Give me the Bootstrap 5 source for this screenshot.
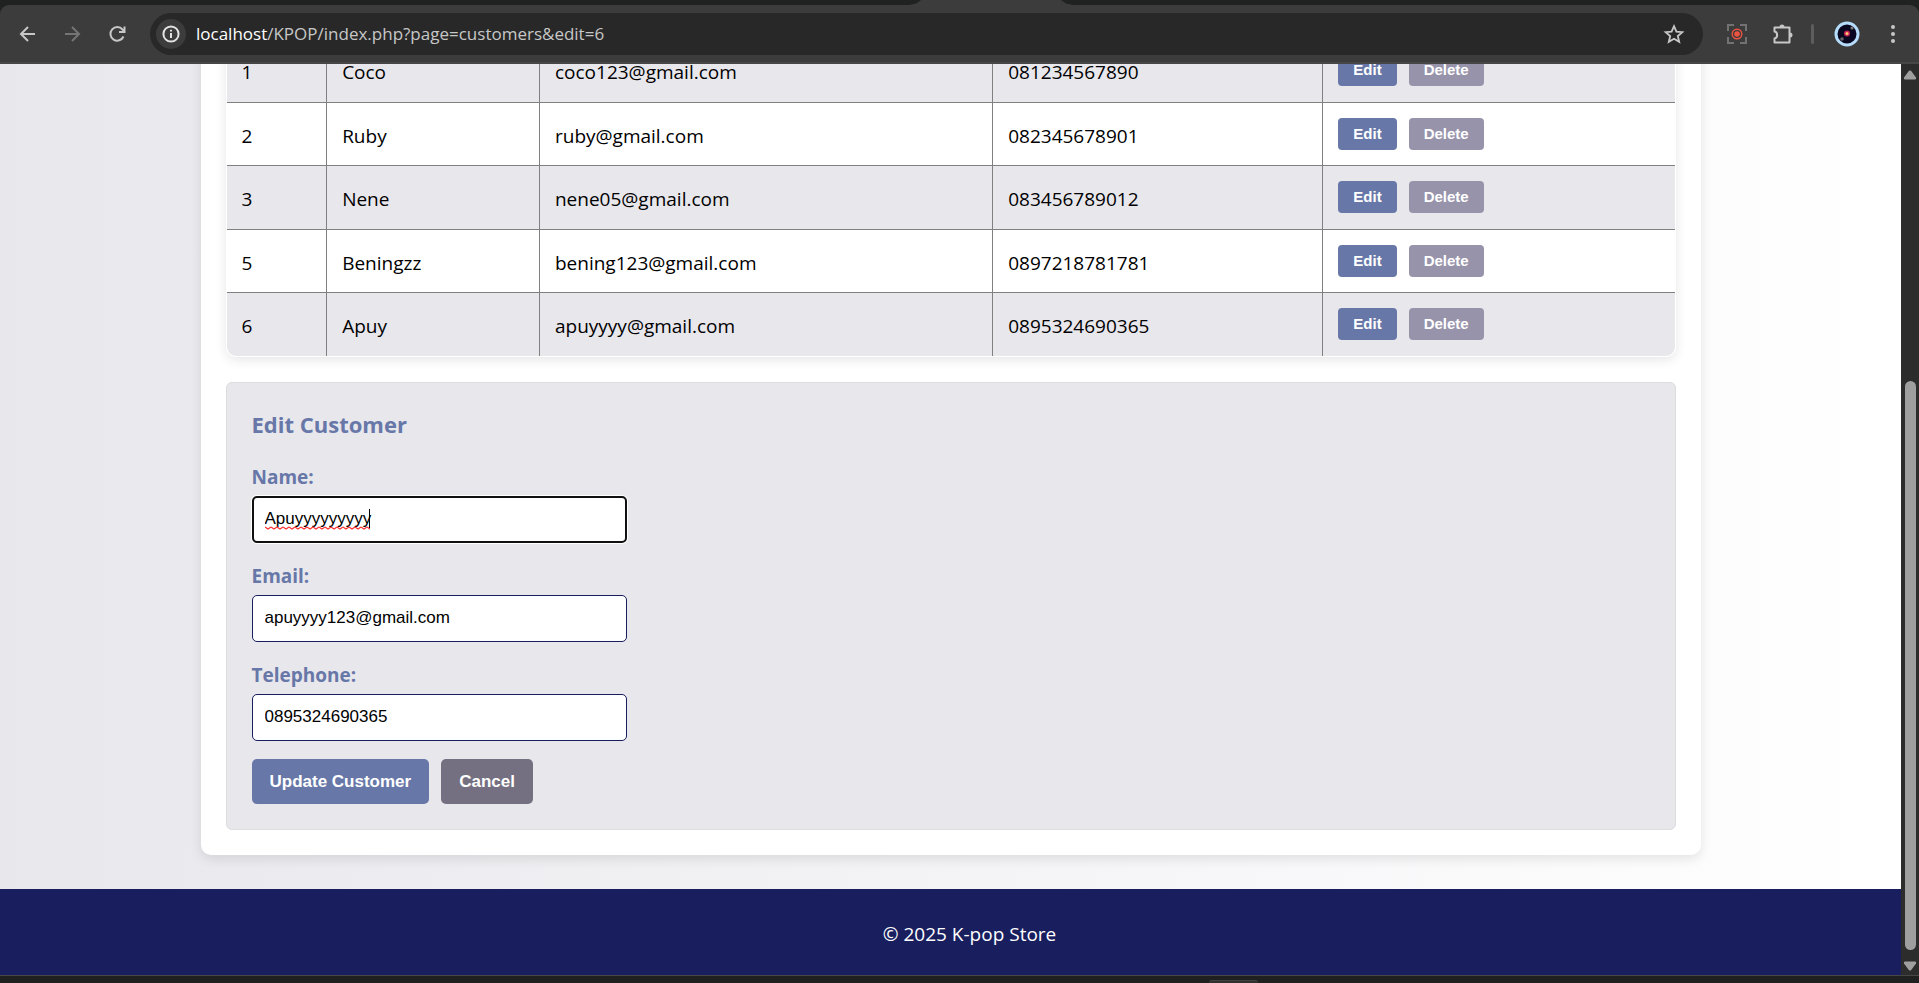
<!DOCTYPE html>
<html lang="en">
<head>
<meta charset="utf-8">
<meta name="viewport" content="width=device-width, initial-scale=1">
<title>K-pop Store - Customers</title>
<link href="https://cdn.jsdelivr.net/npm/bootstrap@5.3.0/dist/css/bootstrap.min.css" rel="stylesheet">
<style>
  :root { --steel: #6777a8; --mauve: #9793ab; --slate: #747081; --navy: #191e5e; --mist: #e8e7ec; --frame: #3c3c3c; }
  body { font-family: "Open Sans", "Noto Sans", sans-serif; font-size: 19px; line-height: 27px; color: #000; background: #202222; }

  /* browser frame */
  .tab-strip { height: 5px; flex: none; background: #202222; }
  .tab-foot { position: absolute; left: 48%; top: 0; width: 140px; height: 5px; background: var(--frame); }
  .tab-foot::before, .tab-foot::after { content: ""; position: absolute; top: 0; width: 12px; height: 5px; background: var(--frame); }
  .tab-foot::before { right: 100%; clip-path: polygon(100% 0, 100% 100%, 0 100%, 60% 70%); }
  .tab-foot::after { left: 100%; clip-path: polygon(0 0, 0 100%, 100% 100%, 40% 70%); }
  .toolbar { height: 59px; flex: none; padding: 0 17px; background: var(--frame); border-bottom: 2px solid #474747; border-radius: 9px 9px 0 0; }
  .tool { display: flex; padding: 0; border: 0; background: none; }
  .omnibox { height: 42px; margin-left: 22px; padding: 0 18px 0 6px; border-radius: 21px; background: #282828; color: #c7c7c7; }
  .site-info { width: 30px; height: 30px; margin-right: 10px; border-radius: 50%; background: var(--frame); }
  .address { font-size: 17px; line-height: 24px; }
  .address b { font-weight: 400; color: #fff; }
  .tool-rule { width: 3px; height: 20px; border-radius: 2px; background: #5d5d5d; }

  /* page */
  .viewport { min-height: 0; overflow: hidden; }
  .page { background: linear-gradient(to right, var(--mist), #fff); }
  .sheet { flex: none; width: calc(100% - 50px); max-width: 1500px; padding: 25px; background: #fff; border-radius: 10px; box-shadow: 0 4px 12px rgba(0,0,0,.1); }
  .table-shell { border: 1px solid #fff; border-top: 0; border-radius: 10px; box-shadow: 0 3px 12px rgba(0,0,0,.1); overflow: hidden; margin-bottom: 25px; }
  .customers { width: 100%; table-layout: fixed; border-collapse: separate; border-spacing: 0; }
  .customers td { height: 63px; padding: 17px 15px 0; line-height: 32px; vertical-align: top; background: #fff; border-right: 1px solid #808080; border-bottom: 1px solid #808080; }
  .customers tr:nth-child(odd) td { height: 64px; background: var(--mist); }
  .customers td:last-child { border-right: 0; padding: 15px 15px 0; }
  .customers tr:last-child td { height: 63px; border-bottom: 0; }
  .w-id { width: 6.95%; } .w-name { width: 14.7%; } .w-mail { width: 31.3%; } .w-phone { width: 22.8%; }
  .act { font-family: "Liberation Sans", Arial, sans-serif; font-weight: 700; color: #fff; border: 0; border-radius: 4px; }
  .act:hover { color: #fff; }
  .act-row { font-size: 15px; line-height: 18px; height: 32px; padding: 7px 15px; }
  .act-form { font-size: 17px; line-height: 19px; height: 45px; padding: 13px 18px; border-radius: 5px; }
  .bg-steel, .bg-steel:hover { background: var(--steel); }
  .bg-mauve, .bg-mauve:hover { background: var(--mauve); }
  .bg-slate, .bg-slate:hover { background: var(--slate); }

  .editor { padding: 25px; background: var(--mist); border: 1px solid #dcdcde; border-radius: 6px; color: var(--steel); }
  .editor h3 { font-size: 22px; line-height: 32px; font-weight: 700; margin-bottom: 24px; }
  .editor label { display: block; font-weight: 700; margin-bottom: 5px; }
  .field { width: 375px; max-width: 100%; margin-bottom: 20px; }
  .field-end { margin-bottom: 18px; }
  .field .form-control { height: 47px; padding: 0 12px 2px; font: 17px/24px "Liberation Sans", Arial, sans-serif; color: #000; border: 1px solid var(--navy); border-radius: 5px; }
  .field .is-active { border: 2px solid #101010; padding: 0 11px 2px; box-shadow: 0 0 0 1px #fff; }
  .typing { position: absolute; left: 13px; top: 12px; pointer-events: none; }
  .page-foot { flex: none; margin-top: 34px; height: 86px; padding: 4px 0 0 38px; background: var(--navy); color: #fff; }

  .scroller { width: 18px; flex: none; padding: 6px 0 4px; background: #2c2c2c; }
  .thumb { width: 11px; flex: 569; border-radius: 6px; background: #9f9f9f; }
  .gap-over { flex: 301; }
  .gap-under { height: 11px; }
  .os-edge { height: 8px; flex: none; border-top: 1px solid #474747; background: #202020; }
  .os-hint { position: absolute; left: 63%; bottom: 0; width: 49px; height: 3px; border-radius: 4px 4px 0 0; border-top: 1px solid #424242; background: #303030; }
</style>
</head>
<body class="vh-100 d-flex flex-column overflow-hidden">
  <div class="tab-strip position-relative"><span class="tab-foot"></span></div>
  <header class="toolbar d-flex align-items-center">
    <button class="tool me-4" aria-label="Back"><svg width="21" height="20" viewBox="0 0 21 20" fill="none" stroke="#c7c7c7" stroke-width="2"><path d="M18 10H4M11 3L4 10l7 7"/></svg></button>
    <button class="tool me-4" aria-label="Forward"><svg width="21" height="20" viewBox="0 0 21 20" fill="none" stroke="#757575" stroke-width="2"><path d="M3 10h14M10 3l7 7-7 7"/></svg></button>
    <button class="tool" aria-label="Reload"><svg width="21" height="20" viewBox="0 0 21 20" fill="none" stroke="#c7c7c7" stroke-width="2"><path d="M16.500 12.500A6.800 6.800 0 1 1 15.500 5.500L17 7M17.500 2.500V8H12"/></svg></button>
    <div class="omnibox d-flex align-items-center flex-grow-1 me-4">
      <button class="tool site-info align-items-center justify-content-center" aria-label="Site information"><svg width="18" height="18" viewBox="0 0 18 18" fill="none" stroke="#e3e3e3" stroke-width="2"><circle cx="9" cy="9" r="7.600"/><path d="M9 8v5M9 4.800v1.800"/></svg></button>
      <span class="address flex-grow-1"><b>localhost</b>/KPOP/index.php?page=customers&amp;edit=6</span>
      <button class="tool" aria-label="Bookmark"><svg width="22" height="22" viewBox="0 0 22 22" fill="none" stroke="#c7c7c7" stroke-width="1.800"><path d="M11 3.200l2.400 5.400 5.900.5-4.500 3.900 1.400 5.800-5.200-3.100-5.200 3.100 1.400-5.800-4.500-3.900 5.900-.5z"/></svg></button>
    </div>
    <button class="tool me-4" aria-label="Screen recorder"><svg width="20" height="20" viewBox="0 0 20 20" fill="none" stroke="#727272" stroke-width="2"><path d="M1 7V1h6M13 1h6v6M19 13v6h-6M7 19H1v-6"/><circle cx="10" cy="10" r="4.800" stroke="#ee5340" stroke-width="1.400"/><circle cx="10" cy="10" r="2.800" fill="#ee5340" stroke="none"/></svg></button>
    <button class="tool me-3" aria-label="Extensions"><svg width="24" height="24" viewBox="0 0 24 24" fill="none" stroke="#c7c7c7" stroke-width="2" stroke-linejoin="round"><path d="M3.500 5.500H18.500V20.500H3.500V16.500C7 16 7 10 3.500 9.500Z"/><path d="M8.500 5a2.500 2.500 0 0 1 5 0zM19 10.500a2.500 2.500 0 0 1 0 5z" fill="#c7c7c7" stroke="none"/></svg></button>
    <span class="tool-rule me-3"></span>
    <button class="tool ms-1 me-3" aria-label="Profile"><svg width="26" height="26" viewBox="0 0 26 26"><circle cx="13" cy="13" r="11" fill="#0a0720" stroke="#b5dcfb" stroke-width="3"/><circle cx="8" cy="18" r="1.800" fill="#666"/><circle cx="18" cy="7" r="1.600" fill="#777"/><circle cx="13" cy="12.500" r="3" fill="#c42058"/><circle cx="13" cy="12.500" r="1.500" fill="#ffc36c"/></svg></button>
    <button class="tool ms-2" aria-label="Menu"><svg width="18" height="20" viewBox="0 0 18 20" fill="#c7c7c7"><circle cx="9" cy="3" r="2"/><circle cx="9" cy="10" r="2"/><circle cx="9" cy="17" r="2"/></svg></button>
  </header>

  <div class="viewport d-flex flex-grow-1">
    <div class="page d-flex flex-column justify-content-end flex-grow-1 overflow-hidden">
      <main class="sheet mx-auto">
        <div class="table-shell">
          <table class="customers">
            <colgroup><col class="w-id"><col class="w-name"><col class="w-mail"><col class="w-phone"><col></colgroup>
            <tbody>
              <tr><td>1</td><td>Coco</td><td>coco123@gmail.com</td><td>081234567890</td><td><div class="d-flex"><button class="btn act act-row bg-steel me-2">Edit</button><button class="btn act act-row bg-mauve ms-1">Delete</button></div></td></tr>
              <tr><td>2</td><td>Ruby</td><td>ruby@gmail.com</td><td>082345678901</td><td><div class="d-flex"><button class="btn act act-row bg-steel me-2">Edit</button><button class="btn act act-row bg-mauve ms-1">Delete</button></div></td></tr>
              <tr><td>3</td><td>Nene</td><td>nene05@gmail.com</td><td>083456789012</td><td><div class="d-flex"><button class="btn act act-row bg-steel me-2">Edit</button><button class="btn act act-row bg-mauve ms-1">Delete</button></div></td></tr>
              <tr><td>5</td><td>Beningzz</td><td>bening123@gmail.com</td><td>0897218781781</td><td><div class="d-flex"><button class="btn act act-row bg-steel me-2">Edit</button><button class="btn act act-row bg-mauve ms-1">Delete</button></div></td></tr>
              <tr><td>6</td><td>Apuy</td><td>apuyyyy@gmail.com</td><td>0895324690365</td><td><div class="d-flex"><button class="btn act act-row bg-steel me-2">Edit</button><button class="btn act act-row bg-mauve ms-1">Delete</button></div></td></tr>
            </tbody>
          </table>
        </div>
        <form class="editor">
          <h3>Edit Customer</h3>
          <div class="field">
            <label for="name">Name:</label>
            <div class="position-relative">
              <input class="form-control is-active" id="name" type="text" value="Apuyyyyyyyyy">
              <!-- spelling mark and text caret -->
              <svg class="typing" width="108" height="24" viewBox="0 0 108 24" fill="none"><defs><pattern id="wave" width="6" height="4" y="18" patternUnits="userSpaceOnUse"><path d="M0 1L3 3L6 1" stroke="#f33" stroke-width="1.200" fill="none"/></pattern></defs><rect y="18" width="105" height="4" fill="url(#wave)"/><path d="M104.500 1v19" stroke="#000"/></svg>
            </div>
          </div>
          <div class="field">
            <label for="email">Email:</label>
            <input class="form-control" id="email" type="email" value="apuyyyy123@gmail.com">
          </div>
          <div class="field field-end">
            <label for="phone">Telephone:</label>
            <input class="form-control" id="phone" type="text" value="0895324690365">
          </div>
          <div class="d-flex">
            <button type="submit" class="btn act act-form bg-steel me-2">Update Customer</button>
            <button type="button" class="btn act act-form bg-slate ms-1">Cancel</button>
          </div>
        </form>
      </main>
      <footer class="page-foot d-flex align-items-center justify-content-center">© 2025 K-pop Store</footer>
    </div>
    <div class="scroller d-flex flex-column align-items-center" aria-hidden="true">
      <svg width="14" height="10" viewBox="0 0 14 10" fill="#9f9f9f"><path d="M6 .8Q7 0 8 .8L13 7.500Q13.500 9.500 12 9.500H2Q.5 9.500 1 7.500Z"/></svg>
      <span class="gap-over"></span><span class="thumb"></span><span class="gap-under"></span>
      <svg width="14" height="10" viewBox="0 0 14 10" fill="#9f9f9f"><path d="M6 9.200Q7 10 8 9.200L13 2.500Q13.500.5 12 .5H2Q.5.5 1 2.500Z"/></svg>
    </div>
  </div>
  <div class="os-edge position-relative"><span class="os-hint"></span></div>
<script src="https://cdn.jsdelivr.net/npm/bootstrap@5.3.0/dist/js/bootstrap.bundle.min.js"></script>
</body>
</html>
